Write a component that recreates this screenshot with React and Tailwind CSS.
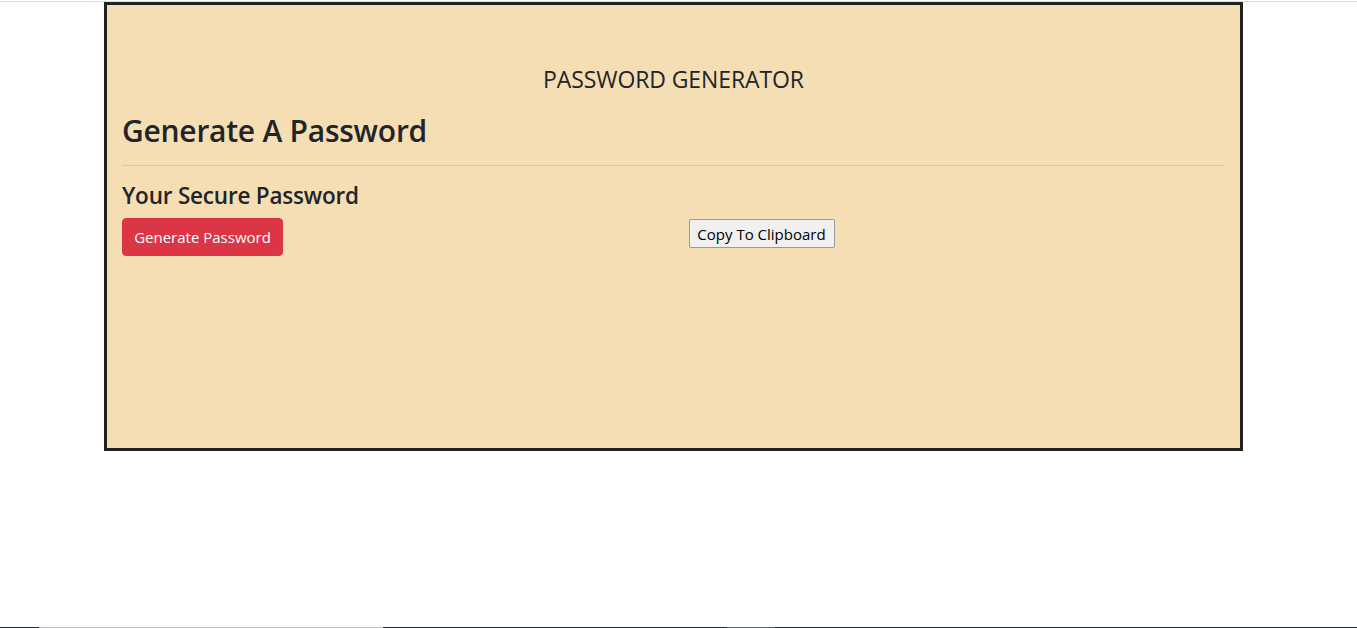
export default function App() {
  return (
    <div
      className="flex h-[628px] w-[1357px] flex-col overflow-hidden bg-white text-[#212529]"
      style={{ fontFamily: '"Open Sans", "Noto Sans", sans-serif' }}
    >
      <div className="mt-px h-px w-full bg-[#dedede]" />
      <div className="ml-[104px] h-[449px] w-[1139px] border-[3px] border-[#222222] bg-[#f5deb3] px-[15px]">
        <header className="pt-[60px] text-center">
          <h4 className="text-[23px] font-normal leading-[29px] tracking-[-0.1px]">PASSWORD GENERATOR</h4>
        </header>
        <h1 className="mt-[18px] text-[30px] font-semibold leading-[38px] tracking-[-0.25px]">Generate A Password</h1>
        <hr className="mt-[15px] border-0 border-t border-black/10" />
        <h4 className="mt-[15px] text-[22.5px] font-semibold leading-[29px] tracking-[-0.2px]">Your Secure Password</h4>
        <div className="mt-[8px] grid grid-cols-2 gap-[30px]">
          <div>
            <button className="h-[38px] w-[161px] rounded-[4px] border border-[#dc3545] bg-[#dc3545] text-[15px] leading-[24px] text-white">
              Generate Password
            </button>
          </div>
          <div className="pt-px">
            <button className="h-[29px] w-[146px] rounded-[2px] border border-[#9a9a9a] bg-[#f0f0f0] text-[15px] leading-[24px] text-black">
              Copy To Clipboard
            </button>
          </div>
        </div>
      </div>
      <div className="flex-1" />
      <div className="flex h-px w-full">
        <div className="w-[39px] bg-[#2b2f33]" />
        <div className="w-[344px] bg-[#c4c4c4]" />
        <div className="w-[344px] bg-[#2b2f33]" />
        <div className="w-[48px] bg-[#5a5e62]" />
        <div className="flex-1 bg-[#2b2f33]" />
      </div>
    </div>
  );
}
